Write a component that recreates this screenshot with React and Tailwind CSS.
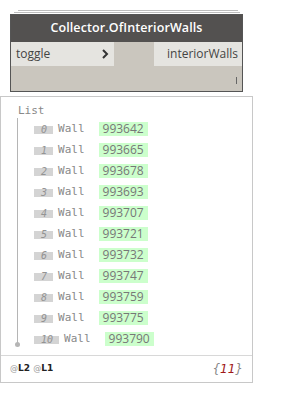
import React from "react";

const values = ["993642","993665","993678","993693","993707","993721","993732","993747","993759","993775","993790"];

export default function App() {
  const mono = { fontFamily: '"DejaVu Sans Mono", monospace' };
  return (
    <div className="w-[304px] h-[394px] bg-white relative" style={{ fontFamily: '"Open Sans", sans-serif' }}>
      <div className="pt-[10px]">
        <div className="ml-[18px] w-[220px] h-px bg-[#bdbdbd]" />
        <div className="mt-px ml-[14px] w-[226px] h-px bg-[#bdbdbd]" />
        <div className="mt-px ml-[10px] w-[233px] border border-[#555555] bg-[#cac6be]">
          <div className="h-[27px] bg-[#535150] flex items-center justify-center text-white text-[12.5px] font-semibold tracking-[0.1px]">
            Collector.OfInteriorWalls
          </div>
          <div className="h-[24px] flex justify-between">
            <div className="w-[103px] bg-[#e5e4e0] flex items-center justify-between pl-[5px] pr-[5px] text-[12px] text-[#444]">
              <span>toggle</span>
              <svg width="7" height="10" viewBox="0 0 7 10"><path d="M1 1 L5 5 L1 9" stroke="#333" strokeWidth="2" fill="none" /></svg>
            </div>
            <div className="w-[88px] bg-[#e5e4e0] flex items-center justify-end pr-[4px] text-[12px] text-[#444]">
              interiorWalls
            </div>
          </div>
          <div className="h-[25px] flex items-end justify-end pr-[5px] pb-[7px]">
            <div className="w-px h-[7px] bg-[#666]" />
          </div>
        </div>
      </div>
      <div className="mt-[4px] w-[253px] border border-[#c8c8c8] bg-white">
        <div className="pt-[7px] pl-[17px] h-[21px] text-[11px] leading-[14px] text-[#888]" style={mono}>List</div>
        <div className="flex">
          <div className="ml-[16px] relative w-px h-[227px] bg-[#b5b5b5]">
            <div className="absolute left-[-2px] bottom-[-2px] w-[5px] h-[5px] rounded-full bg-[#b5b5b5]" />
          </div>
          <div className="pl-[16px] flex flex-col">
            {values.map((v, i) => (
              <div key={i} className="h-[21px] flex items-center">
                <span className="relative top-[1px] inline-block h-[14px] leading-[14px] pl-[7px] pr-[6px] bg-[linear-gradient(to_bottom,transparent_3px,#d4d4d4_3px,#d4d4d4_11px,transparent_11px)] text-[10px] italic text-[#939393]" style={mono}>{i}</span>
                <span className="relative top-[1px] ml-[5px] text-[11px] text-[#888]" style={mono}>Wall</span>
                <span className="relative top-[0.5px] ml-[14px] h-[14px] px-[4px] bg-[#ccffcc] text-[12px] leading-[14px] text-[#777]">{v}</span>
              </div>
            ))}
          </div>
        </div>
        <div className="h-[6px]" />
        <div className="border-t border-[#d8d8d8] h-[27px] flex items-center justify-between pl-[9px] pr-[9px]">
          <div className="text-[9px] font-bold text-[#222]" style={{ fontFamily: '"DejaVu Sans", sans-serif' }}>
            <span className="text-[#999] font-normal text-[8px]">@</span>L2 <span className="text-[#999] font-normal text-[8px]">@</span>L1
          </div>
          <div className="text-[12px] italic text-[#888]" style={{ fontFamily: '"DejaVu Sans", sans-serif' }}>
            {"{"}<span className="text-[#a01818]">11</span>{"}"}
          </div>
        </div>
      </div>
    </div>
  );
}
